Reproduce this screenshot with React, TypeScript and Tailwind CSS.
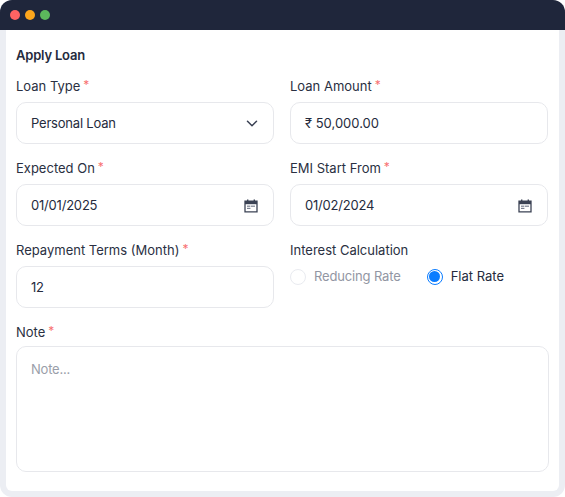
import React from "react";

const Req = () => <span className="ml-[3px] relative top-[-2px] text-[12px] leading-none text-[#f87171]">*</span>;

function Label({ text, req = true }: { text: string; req?: boolean }) {
  return (
    <div className="h-5 text-[13px] leading-5 text-[#2a3042] whitespace-nowrap">
      {text}
      {req && <Req />}
    </div>
  );
}

function Box({ children }: { children: React.ReactNode }) {
  return (
    <div className="mt-[6px] h-[42px] flex items-center justify-between rounded-[10px] border border-[#e7e8ec] bg-white pl-[14px] pr-[14px] pt-[2px] text-[13px] tracking-[-0.2px] text-[#252b3d]">
      {children}
    </div>
  );
}

const Calendar = () => (
  <svg width="14" height="14" viewBox="0 0 14 14" fill="none" className="mr-[1px]">
    <rect x="3" y="0.5" width="1.4" height="2.5" fill="#3b4254" />
    <rect x="9.6" y="0.5" width="1.4" height="2.5" fill="#3b4254" />
    <path d="M1 2.2h12v10.6H1z" fill="#fff" stroke="#3b4254" strokeWidth="1.3" />
    <rect x="1" y="2" width="12" height="3.2" fill="#3b4254" />
    <rect x="3" y="6.6" width="3.4" height="1.2" fill="#7b8090" />
    <rect x="7" y="6.6" width="4" height="1.2" fill="#7b8090" />
    <rect x="3" y="8.8" width="3.4" height="1.2" fill="#7b8090" />
  </svg>
);

export default function App() {
  return (
    <div className="w-[565px] h-[497px] bg-white overflow-hidden" style={{ fontFamily: "Inter, 'Noto Sans', sans-serif" }}>
      <div className="h-full flex flex-col rounded-[12px] bg-[#eceef3] overflow-hidden">
        <div className="h-[30px] shrink-0 bg-[#1f263b] flex items-center gap-[5px] pl-[10px]">
          <span className="w-[10px] h-[10px] rounded-full bg-[#ff6363]" />
          <span className="w-[10px] h-[10px] rounded-full bg-[#fda61c]" />
          <span className="w-[10px] h-[10px] rounded-full bg-[#5cb85c]" />
        </div>
        <div className="mx-[6px] h-[461px] bg-white rounded-b-[6px] pl-[10px] pr-[10px]">
          <div className="pt-[15px] h-[46px] text-[13px] font-semibold leading-5 tracking-[-0.2px] text-[#252b3d]">Apply Loan</div>
          <div className="grid grid-cols-[258px_258px] gap-x-[16px] gap-y-[14px]">
            <div>
              <Label text="Loan Type" />
              <Box>
                <span>Personal Loan</span>
                <svg width="14" height="14" viewBox="0 0 14 14" fill="none" stroke="#3b4254" strokeWidth="1.5" strokeLinecap="round" strokeLinejoin="round">
                  <path d="M2.5 4.3 7 8.7l4.5-4.4" />
                </svg>
              </Box>
            </div>
            <div>
              <Label text="Loan Amount" />
              <Box><span className="tracking-normal">₹ 50,000.00</span></Box>
            </div>
            <div>
              <Label text="Expected On" />
              <Box><span>01/01/2025</span><Calendar /></Box>
            </div>
            <div>
              <Label text="EMI Start From" />
              <Box><span>01/02/2024</span><Calendar /></Box>
            </div>
            <div>
              <Label text="Repayment Terms (Month)" />
              <Box><span>12</span></Box>
            </div>
            <div>
              <Label text="Interest Calculation" req={false} />
              <div className="mt-[7px] flex items-center text-[13px]">
                <span className="w-4 h-4 rounded-full border border-[#e9ebf0] bg-white" />
                <span className="ml-2 tracking-[-0.15px] text-[#9296a3]">Reducing Rate</span>
                <span className="ml-[26px] w-4 h-4 rounded-full border border-[#0a7cff] bg-white flex items-center justify-center">
                  <span className="w-[11px] h-[11px] rounded-full bg-[#0a7cff]" />
                </span>
                <span className="ml-2 text-[#252b3d]">Flat Rate</span>
              </div>
            </div>
          </div>
          <div className="mt-[14px]">
            <Label text="Note" />
            <div className="mt-1 w-[533px] h-[126px] rounded-[10px] border border-[#e7e8ec] bg-white px-[14px] pt-[12px] text-[13px] leading-5 tracking-[-0.2px] text-[#9a9ea9]">Note...</div>
          </div>
        </div>
      </div>
    </div>
  );
}
